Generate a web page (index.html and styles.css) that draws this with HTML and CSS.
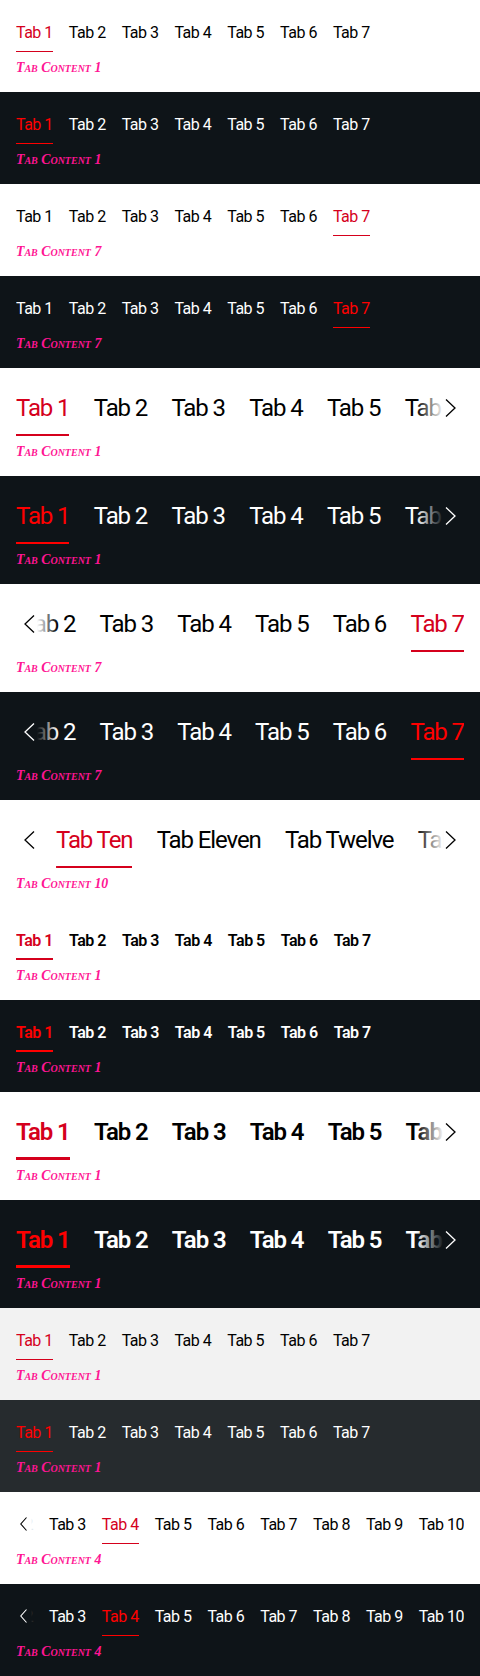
FILE: index.html
```html
<!DOCTYPE html>
<html lang="en">
<head>
<meta charset="utf-8">
<title>Tabs Bar</title>
<link rel="stylesheet" href="styles.css">
</head>
<body>

<section class="demo light small">
  <div class="tabs"><div class="track">
    <span class="tab active">Tab 1</span><span class="tab">Tab 2</span><span class="tab">Tab 3</span><span class="tab">Tab 4</span><span class="tab">Tab 5</span><span class="tab">Tab 6</span><span class="tab">Tab 7</span>
  </div></div>
  <p class="content">Tab Content 1</p>
</section>

<section class="demo dark small">
  <div class="tabs"><div class="track">
    <span class="tab active">Tab 1</span><span class="tab">Tab 2</span><span class="tab">Tab 3</span><span class="tab">Tab 4</span><span class="tab">Tab 5</span><span class="tab">Tab 6</span><span class="tab">Tab 7</span>
  </div></div>
  <p class="content">Tab Content 1</p>
</section>

<section class="demo light small">
  <div class="tabs"><div class="track">
    <span class="tab">Tab 1</span><span class="tab">Tab 2</span><span class="tab">Tab 3</span><span class="tab">Tab 4</span><span class="tab">Tab 5</span><span class="tab">Tab 6</span><span class="tab active">Tab 7</span>
  </div></div>
  <p class="content">Tab Content 7</p>
</section>

<section class="demo dark small">
  <div class="tabs"><div class="track">
    <span class="tab">Tab 1</span><span class="tab">Tab 2</span><span class="tab">Tab 3</span><span class="tab">Tab 4</span><span class="tab">Tab 5</span><span class="tab">Tab 6</span><span class="tab active">Tab 7</span>
  </div></div>
  <p class="content">Tab Content 7</p>
</section>

<section class="demo light medium">
  <div class="tabs">
    <div class="track">
      <span class="tab active">Tab 1</span><span class="tab">Tab 2</span><span class="tab">Tab 3</span><span class="tab">Tab 4</span><span class="tab">Tab 5</span><span class="tab">Tab 6</span><span class="tab">Tab 7</span>
    </div>
    <span class="fade next"><svg width="11" height="18" viewBox="0 0 11 18"><path d="M1 0.5 L10 9 L1 17.5"/></svg></span>
  </div>
  <p class="content">Tab Content 1</p>
</section>

<section class="demo dark medium">
  <div class="tabs">
    <div class="track">
      <span class="tab active">Tab 1</span><span class="tab">Tab 2</span><span class="tab">Tab 3</span><span class="tab">Tab 4</span><span class="tab">Tab 5</span><span class="tab">Tab 6</span><span class="tab">Tab 7</span>
    </div>
    <span class="fade next"><svg width="11" height="18" viewBox="0 0 11 18"><path d="M1 0.5 L10 9 L1 17.5"/></svg></span>
  </div>
  <p class="content">Tab Content 1</p>
</section>

<section class="demo light medium">
  <div class="tabs">
    <div class="track end">
      <span class="tab">Tab 1</span><span class="tab">Tab 2</span><span class="tab">Tab 3</span><span class="tab">Tab 4</span><span class="tab">Tab 5</span><span class="tab">Tab 6</span><span class="tab active">Tab 7</span>
    </div>
    <span class="fade prev"><svg width="11" height="18" viewBox="0 0 11 18"><path d="M10 0.5 L1 9 L10 17.5"/></svg></span>
  </div>
  <p class="content">Tab Content 7</p>
</section>

<section class="demo dark medium">
  <div class="tabs">
    <div class="track end">
      <span class="tab">Tab 1</span><span class="tab">Tab 2</span><span class="tab">Tab 3</span><span class="tab">Tab 4</span><span class="tab">Tab 5</span><span class="tab">Tab 6</span><span class="tab active">Tab 7</span>
    </div>
    <span class="fade prev"><svg width="11" height="18" viewBox="0 0 11 18"><path d="M10 0.5 L1 9 L10 17.5"/></svg></span>
  </div>
  <p class="content">Tab Content 7</p>
</section>

<section class="demo light medium">
  <div class="tabs">
    <div class="track scrolled">
      <span class="tab active">Tab Ten</span><span class="tab">Tab Eleven</span><span class="tab">Tab Twelve</span><span class="tab">Tab Thirteen</span>
    </div>
    <span class="fade prev"><svg width="11" height="18" viewBox="0 0 11 18"><path d="M10 0.5 L1 9 L10 17.5"/></svg></span>
    <span class="fade next"><svg width="11" height="18" viewBox="0 0 11 18"><path d="M1 0.5 L10 9 L1 17.5"/></svg></span>
  </div>
  <p class="content">Tab Content 10</p>
</section>

<section class="demo light small bold">
  <div class="tabs"><div class="track">
    <span class="tab active">Tab 1</span><span class="tab">Tab 2</span><span class="tab">Tab 3</span><span class="tab">Tab 4</span><span class="tab">Tab 5</span><span class="tab">Tab 6</span><span class="tab">Tab 7</span>
  </div></div>
  <p class="content">Tab Content 1</p>
</section>

<section class="demo dark small bold">
  <div class="tabs"><div class="track">
    <span class="tab active">Tab 1</span><span class="tab">Tab 2</span><span class="tab">Tab 3</span><span class="tab">Tab 4</span><span class="tab">Tab 5</span><span class="tab">Tab 6</span><span class="tab">Tab 7</span>
  </div></div>
  <p class="content">Tab Content 1</p>
</section>

<section class="demo light medium bold">
  <div class="tabs">
    <div class="track">
      <span class="tab active">Tab 1</span><span class="tab">Tab 2</span><span class="tab">Tab 3</span><span class="tab">Tab 4</span><span class="tab">Tab 5</span><span class="tab">Tab 6</span><span class="tab">Tab 7</span>
    </div>
    <span class="fade next"><svg width="11" height="18" viewBox="0 0 11 18"><path d="M1 0.5 L10 9 L1 17.5"/></svg></span>
  </div>
  <p class="content">Tab Content 1</p>
</section>

<section class="demo dark medium bold">
  <div class="tabs">
    <div class="track">
      <span class="tab active">Tab 1</span><span class="tab">Tab 2</span><span class="tab">Tab 3</span><span class="tab">Tab 4</span><span class="tab">Tab 5</span><span class="tab">Tab 6</span><span class="tab">Tab 7</span>
    </div>
    <span class="fade next"><svg width="11" height="18" viewBox="0 0 11 18"><path d="M1 0.5 L10 9 L1 17.5"/></svg></span>
  </div>
  <p class="content">Tab Content 1</p>
</section>

<section class="demo surface small">
  <div class="tabs"><div class="track">
    <span class="tab active">Tab 1</span><span class="tab">Tab 2</span><span class="tab">Tab 3</span><span class="tab">Tab 4</span><span class="tab">Tab 5</span><span class="tab">Tab 6</span><span class="tab">Tab 7</span>
  </div></div>
  <p class="content">Tab Content 1</p>
</section>

<section class="demo surface-dark small">
  <div class="tabs"><div class="track">
    <span class="tab active">Tab 1</span><span class="tab">Tab 2</span><span class="tab">Tab 3</span><span class="tab">Tab 4</span><span class="tab">Tab 5</span><span class="tab">Tab 6</span><span class="tab">Tab 7</span>
  </div></div>
  <p class="content">Tab Content 1</p>
</section>

<section class="demo light small">
  <div class="tabs">
    <div class="track end">
      <span class="tab">Tab 1</span><span class="tab">Tab 2</span><span class="tab">Tab 3</span><span class="tab active">Tab 4</span><span class="tab">Tab 5</span><span class="tab">Tab 6</span><span class="tab">Tab 7</span><span class="tab">Tab 8</span><span class="tab">Tab 9</span><span class="tab">Tab 10</span>
    </div>
    <span class="fade prev"><svg width="7" height="14" viewBox="0 0 7 14"><path d="M6.5 0.5 L0.8 7 L6.5 13.5"/></svg></span>
  </div>
  <p class="content">Tab Content 4</p>
</section>

<section class="demo dark small">
  <div class="tabs">
    <div class="track end">
      <span class="tab">Tab 1</span><span class="tab">Tab 2</span><span class="tab">Tab 3</span><span class="tab active">Tab 4</span><span class="tab">Tab 5</span><span class="tab">Tab 6</span><span class="tab">Tab 7</span><span class="tab">Tab 8</span><span class="tab">Tab 9</span><span class="tab">Tab 10</span>
    </div>
    <span class="fade prev"><svg width="7" height="14" viewBox="0 0 7 14"><path d="M6.5 0.5 L0.8 7 L6.5 13.5"/></svg></span>
  </div>
  <p class="content">Tab Content 4</p>
</section>

</body>
</html>
```

FILE: styles.css
```css
* {
  box-sizing: border-box;
  margin: 0;
  padding: 0;
}

body {
  margin: 0;
  background: #fff;
  font-family: Roboto, "Liberation Sans", sans-serif;
}

.demo {
  --bg: #fff;
  --fg: #000;
  --active: #d5001c;
  background: var(--bg);
  color: var(--fg);
  padding: 16px 16px 0;
  overflow: hidden;
}

.demo.dark {
  --bg: #0e1418;
  --fg: #fff;
  --active: #ff0000;
}

.demo.surface {
  --bg: #f2f2f2;
}

.demo.surface-dark {
  --bg: #262b2e;
  --fg: #fff;
  --active: #ff0000;
}

.small { height: 92px; }
.medium { height: 108px; }

.tabs {
  position: relative;
  overflow: hidden;
}

.track {
  display: flex;
  white-space: nowrap;
}

.track.end { justify-content: flex-end; }

.small .track { gap: 16px; }
.medium .track { gap: 24.25px; }
.medium .track.scrolled { padding-left: 40px; }

.tab {
  flex: none;
  position: relative;
}

.small .tab {
  font-size: 16px;
  line-height: 24px;
  letter-spacing: -0.5px;
  padding: 4.5px 0 7.5px;
}

.medium .tab {
  font-size: 24px;
  line-height: 36px;
  letter-spacing: -1.1px;
  padding: 5.5px 0 10.75px;
}

.bold .tab { font-weight: 600; }

.tab.active { color: var(--active); }

.tab.active::after {
  content: "";
  position: absolute;
  left: 0;
  right: 0;
  bottom: 0;
  height: 1.5px;
  background: var(--active);
}

.medium .tab.active::after { height: 2.25px; }
.small.bold .tab.active::after { height: 2px; }
.medium.bold .tab.active::after { height: 3px; }

.content {
  font-family: "Liberation Serif", "Times New Roman", serif;
  font-size: 13.8px;
  line-height: 16px;
  font-style: italic;
  font-weight: bold;
  font-variant: small-caps;
  color: deeppink;
}

.small .content { margin-top: 7.5px; }
.medium .content { margin-top: 8px; }

.fade {
  position: absolute;
  top: 0;
  bottom: 0;
  display: flex;
  align-items: flex-start;
  color: var(--fg);
}

.fade svg {
  display: block;
  fill: none;
  stroke: currentColor;
  stroke-width: 1.3;
}

.medium .fade.next {
  right: 0;
  width: 48px;
  justify-content: flex-end;
  padding: 15px 8px 0 0;
  background: linear-gradient(to right, transparent 0%, var(--bg) 58%);
}

.medium .fade.prev {
  left: 0;
  width: 42px;
  padding: 15px 0 0 8px;
  background: linear-gradient(to right, var(--bg) 50%, transparent 100%);
}

.small .fade.prev {
  left: 0;
  width: 30px;
  padding: 9px 0 0 4px;
  background: linear-gradient(to right, var(--bg) 50%, rgba(255, 255, 255, 0) 100%);
  background: linear-gradient(to right, var(--bg) 50%, transparent 100%);
}

.small .fade svg { stroke-width: 1.1; }
```
